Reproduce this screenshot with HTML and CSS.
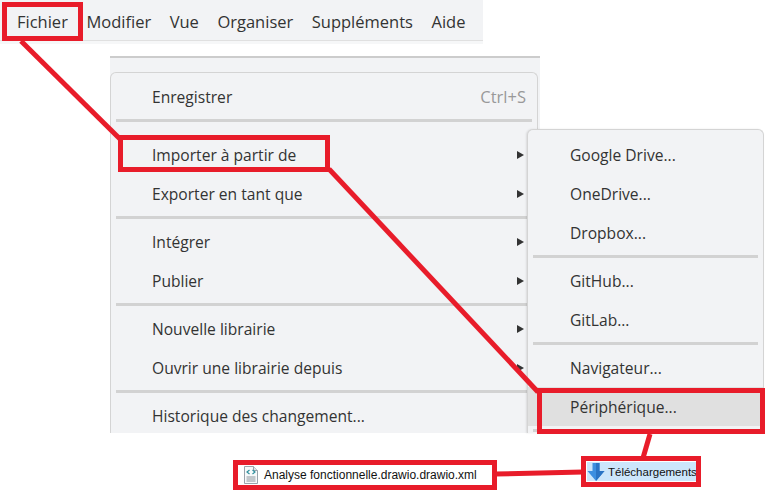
FILE: index.html
```html
<!DOCTYPE html>
<html lang="fr">
<head>
    <meta charset="UTF-8">
    <meta name="viewport" content="width=device-width, initial-scale=1.0">
    <title>Importer à partir de</title>
    <link rel="stylesheet" href="styles.css">
</head>
<body>

    <div class="stage">
        <!-- Menu bar -->
        <div class="menubar">
            <span>Fichier</span>
            <span>Modifier</span>
            <span>Vue</span>
            <span>Organiser</span>
            <span>Suppléments</span>
            <span>Aide</span>
        </div>

        <!-- File menu -->
        <div class="menu-area">
            <div class="menu">
                <div class="menu-item"><span>Enregistrer</span><span class="shortcut">Ctrl+S</span></div>
                <div class="sep sep-wide"></div>
                <div class="menu-item"><span>Importer à partir de</span><i class="arrow"></i></div>
                <div class="menu-item"><span>Exporter en tant que</span><i class="arrow"></i></div>
                <div class="sep"></div>
                <div class="menu-item"><span>Intégrer</span><i class="arrow"></i></div>
                <div class="menu-item"><span>Publier</span><i class="arrow"></i></div>
                <div class="sep"></div>
                <div class="menu-item"><span>Nouvelle librairie</span><i class="arrow"></i></div>
                <div class="menu-item"><span>Ouvrir une librairie depuis</span><i class="arrow"></i></div>
                <div class="sep"></div>
                <div class="menu-item"><span>Historique des changement...</span></div>
            </div>
        </div>

        <!-- Import submenu -->
        <div class="menu submenu">
            <div class="menu-item"><span>Google Drive...</span></div>
            <div class="menu-item"><span>OneDrive...</span></div>
            <div class="menu-item"><span>Dropbox...</span></div>
            <div class="sep"></div>
            <div class="menu-item"><span>GitHub...</span></div>
            <div class="menu-item"><span>GitLab...</span></div>
            <div class="sep"></div>
            <div class="menu-item"><span>Navigateur...</span></div>
            <div class="menu-item selected"><span>Périphérique...</span></div>
            <div class="sep"></div>
        </div>

        <!-- Explorer items -->
        <div class="file-item">
            <svg width="16" height="18" viewBox="0 0 16 18">
                <path d="M1.5 .5h9l4 4v13h-13z" fill="#f7f9fa" stroke="#9aa3ab"/>
                <path d="M10.5 .5v4h4" fill="#dfe5ea" stroke="#9aa3ab"/>
                <path d="M6.5 4L4 6l2.500 2M9.500 4L12 6l-2.500 2" fill="none" stroke="#2f8f9d" stroke-width="1.200"/>
                <path d="M3.500 11h9M3.500 13h9M3.500 15h9" stroke="#8a949c"/>
            </svg>
            <span>Analyse fonctionnelle.drawio.drawio.xml</span>
        </div>
        <div class="folder-item">
            <svg width="18" height="20" viewBox="0 0 18 20">
                <path d="M5.500 1h7v8h5L9 19 .5 9h5z" fill="#3d8fe0"/>
                <path d="M9 1h3.500v8h5L9 19z" fill="#2b74c4"/>
            </svg>
            <span>Téléchargements</span>
        </div>

        <!-- Red annotations -->
        <svg class="notes" width="772" height="498" viewBox="0 0 772 498">
            <g fill="none" stroke="#e81c2a" stroke-width="5">
                <rect x="4.500" y="4.500" width="76" height="34"/>
                <rect x="120.500" y="137.500" width="207" height="32"/>
                <rect x="539.500" y="390.500" width="223" height="41"/>
                <rect x="235.500" y="462.500" width="259" height="25"/>
                <rect x="583.500" y="458.500" width="115" height="26"/>
                <path d="M21 41L120 139"/>
                <path d="M329 169L538 392"/>
                <path d="M650 434L643 458"/>
                <path d="M495 474L583 472"/>
            </g>
        </svg>
    </div>

</body>
</html>
```

FILE: styles.css
```css
* {
    box-sizing: border-box;
}

html, body {
    margin: 0;
    background-color: #fff;
}

body {
    font-family: "Open Sans", "Noto Sans", Arial, sans-serif;
    color: #333;
}

.stage {
    position: relative;
    width: 772px;
    height: 498px;
    overflow: hidden;
}

/* Menu bar */
.menubar {
    display: flex;
    gap: 18.500px;
    width: 483px;
    height: 41px;
    padding: 11px 0 0 17px;
    font-size: 16.500px;
    line-height: 22px;
    background-color: #f2f3f5;
    border-bottom: 1px solid #e0e0e0;
    box-shadow: 0 3px 0 #f6f7f8;
}

/* File menu */
.menu-area {
    width: 430px;
    height: 377px;
    margin: 15px 0 0 110px;
    padding-top: 14px;
    background-color: #f2f3f5;
    border-top: 2px solid #ccc;
}

.menu {
    width: 428px;
    height: 361px;
    padding: 4px 5px 0;
    background-color: #f2f3f5;
    border: 1px solid #d4d4d4;
    border-bottom: 0;
    border-radius: 6px 6px 0 0;
}

.menu-item {
    display: flex;
    align-items: center;
    justify-content: space-between;
    height: 39px;
    padding: 0 6px 0 36px;
    font-size: 15.600px;
    white-space: nowrap;
}

.shortcut {
    font-size: 16.500px;
    color: #999;
}

.arrow {
    width: 0;
    height: 0;
    border-left: 7px solid #333;
    border-top: 4px solid transparent;
    border-bottom: 4px solid transparent;
    margin-right: 2px;
}

.sep {
    height: 3px;
    margin: 3px 0;
    background-color: #d2d2d2;
}

.sep-wide {
    margin-bottom: 13px;
}

/* Import submenu */
.submenu {
    position: absolute;
    left: 527px;
    top: 129px;
    width: 237px;
    height: 304px;
    padding-top: 5px;
    box-shadow: -1px 0 2px rgba(0, 0, 0, 0.1);
}

.submenu .menu-item {
    padding-left: 37px;
}

.submenu .selected {
    margin: 0 -5px;
    padding-left: 42px;
    background-color: #e0e0e0;
}

/* Explorer items */
.file-item,
.folder-item {
    position: absolute;
    display: flex;
    align-items: center;
    font-family: "Liberation Sans", Arial, sans-serif;
    color: #111;
}

.file-item {
    left: 243px;
    top: 466px;
    gap: 5px;
    font-size: 12px;
}

.folder-item {
    left: 587px;
    top: 462px;
    gap: 3px;
    height: 19px;
    padding-right: 2px;
    font-size: 11.500px;
    background-color: #cce6fb;
}

/* Red annotations */
.notes {
    position: absolute;
    left: 0;
    top: 0;
}
```
